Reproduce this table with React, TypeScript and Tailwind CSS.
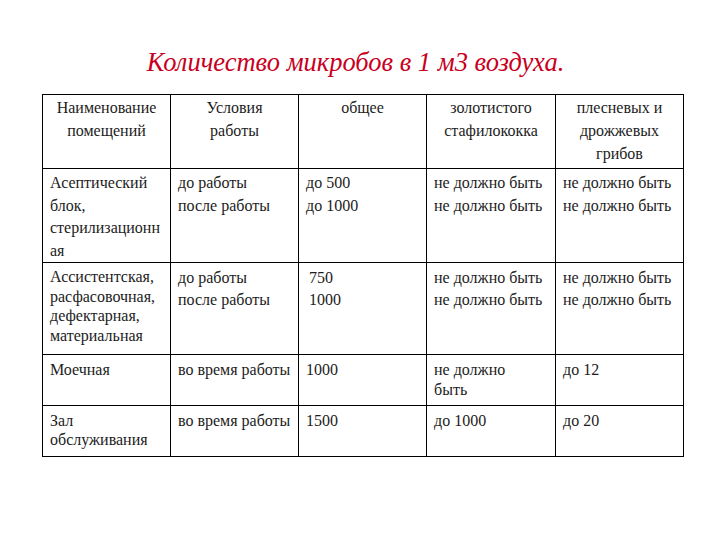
import React from "react";

const rows: { cells: React.ReactNode[]; h: string; lh: string; pt: string }[] = [
  {
    h: "h-[94px]",
    lh: "leading-[22.5px]",
    pt: "pt-[3px]",
    cells: [
      <>Асептический<br />блок,<br />стерилизационн<br />ая</>,
      <>до работы<br />после работы</>,
      <>до 500<br />до 1000</>,
      <>не должно быть<br />не должно быть</>,
      <>не должно быть<br />не должно быть</>,
    ],
  },
  {
    h: "h-[92px]",
    lh: "leading-[22px]",
    pt: "pt-[4px]",
    cells: [
      <span className="block leading-[19.7px]">Ассистентская,<br />расфасовочная,<br />дефектарная,<br />материальная</span>,
      <>до работы<br />после работы</>,
      <span className="pl-[3px] block">750<br />1000</span>,
      <>не должно быть<br />не должно быть</>,
      <>не должно быть<br />не должно быть</>,
    ],
  },
  {
    h: "h-[51px]",
    lh: "leading-[20px]",
    pt: "pt-[5px]",
    cells: [
      <>Моечная</>,
      <>во время работы</>,
      <>1000</>,
      <>не должно<br />быть</>,
      <>до 12</>,
    ],
  },
  {
    h: "h-[51px]",
    lh: "leading-[19px]",
    pt: "pt-[5px]",
    cells: [
      <>Зал<br />обслуживания</>,
      <>во время работы</>,
      <>1500</>,
      <>до 1000</>,
      <>до 20</>,
    ],
  },
];

export default function App() {
  return (
    <div className="w-[720px] h-[540px] bg-white font-['Liberation_Serif'] text-[#1c1c1c]">
      <div className="pt-[47px] h-[94px] pr-[9px] text-center">
        <h1 className="font-['Liberation_Serif'] italic text-[26.5px] leading-[30px] text-[#c8001e] font-normal">
          Количество микробов в 1 м3 воздуха.
        </h1>
      </div>
      <table className="ml-[42px] border-collapse table-fixed font-['Liberation_Serif'] text-[16px] leading-[23px]">
        <colgroup>
          <col className="w-[128px]" />
          <col className="w-[128px]" />
          <col className="w-[128px]" />
          <col className="w-[129px]" />
          <col className="w-[128px]" />
        </colgroup>
        <tbody>
          <tr className="h-[74px]">
            {[
              <>Наименование<br />помещений</>,
              <>Условия<br />работы</>,
              <>общее</>,
              <>золотистого<br />стафилококка</>,
              <>плесневых и<br />дрожжевых<br />грибов</>,
            ].map((c, i) => (
              <td key={i} className="border border-black align-top text-center pt-[1px] px-[2px] whitespace-nowrap">
                {c}
              </td>
            ))}
          </tr>
          {rows.map((r, ri) => (
            <tr key={ri} className={r.h}>
              {r.cells.map((c, i) => (
                <td
                  key={i}
                  className={`border border-black align-top text-left pl-[7px] pr-[1px] whitespace-nowrap ${r.pt} ${r.lh}`}
                >
                  {c}
                </td>
              ))}
            </tr>
          ))}
        </tbody>
      </table>
    </div>
  );
}
